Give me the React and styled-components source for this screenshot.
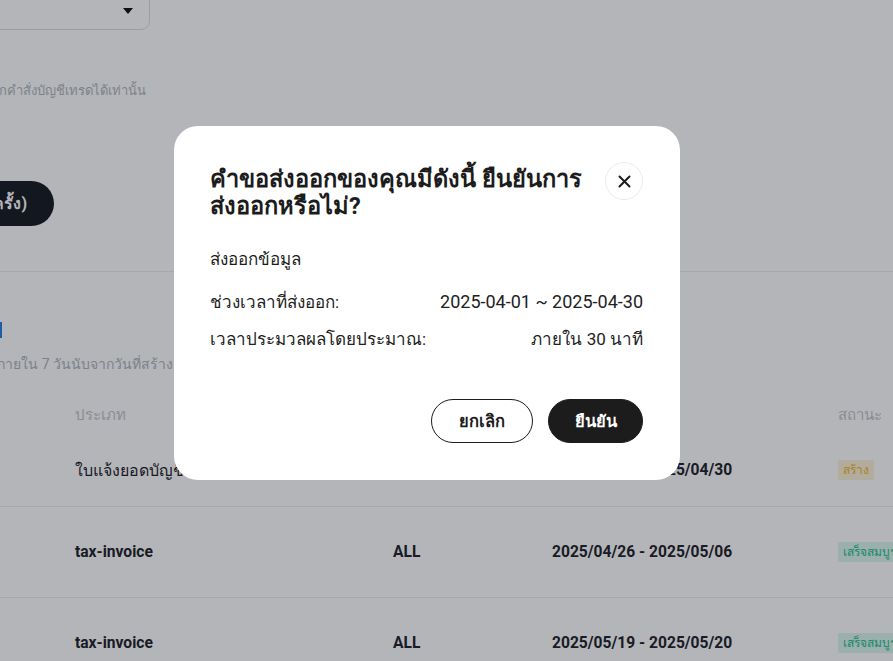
import React from "react";
import styled, { createGlobalStyle } from "styled-components";

const Global = createGlobalStyle`
  html, body { margin: 0; padding: 0; }
  body {
    background: #ffffff;
    font-family: Roboto, "Noto Sans", "Liberation Sans", sans-serif;
    color: #1f2126;
    overflow: hidden;
  }
`;

const Page = styled.div`
  width: 893px;
  height: 661px;
  overflow: hidden;
  background: #ffffff;
`;

const Select = styled.div`
  box-sizing: border-box;
  width: 300px;
  height: 48px;
  margin: -18px 0 0 -150px;
  border: 1px solid #dcdde0;
  border-radius: 9px;
  display: flex;
  align-items: center;
  justify-content: flex-end;
  padding-right: 16px;
`;

const Caret = styled.span`
  width: 0;
  height: 0;
  border-left: 5px solid transparent;
  border-right: 5px solid transparent;
  border-top: 6px solid #111;
  margin-top: 10px;
`;

const ClipRight = styled.div`
  display: flex;
  justify-content: flex-end;
  width: ${(p) => p.$end}px;
  white-space: nowrap;
  margin-top: ${(p) => p.$mt}px;
`;

const Note = styled.span`
  font-size: 13px;
  line-height: 20px;
  color: #b4b6bb;
`;

const SubNote = styled.span`
  font-size: 14px;
  line-height: 20px;
  color: #b1b4b9;
`;

const PillButton = styled.div`
  display: flex;
  align-items: center;
  justify-content: flex-end;
  box-sizing: border-box;
  width: 200px;
  height: 45px;
  margin: 80px 0 0 -146px;
  padding-right: 27px;
  border-radius: 23px;
  background: #171b22;
  color: #ffffff;
  font-weight: 700;
  font-size: 16px;
  white-space: nowrap;
`;

const Divider = styled.div`
  height: 1px;
  background: #ebecee;
  margin-top: 45px;
`;

const BlueMark = styled.div`
  width: 2px;
  height: 16px;
  margin-top: 50px;
  background: #2b7fe0;
`;

const Table = styled.div`
  margin-top: 18px;
`;

const Row = styled.div`
  display: grid;
  grid-template-columns: 318px 159px 286px 1fr;
  align-items: center;
  padding-left: 75px;
  box-sizing: border-box;
  height: ${(p) => p.$h}px;
  padding-bottom: ${(p) => p.$pb || 0}px;
  border-top: ${(p) => (p.$line ? "1px solid #ebecee" : "none")};
  white-space: nowrap;
`;

const HeadCell = styled.span`
  font-size: 15px;
  color: #c3c5c9;
`;

const Cell = styled.span`
  font-size: ${(p) => (p.$thai ? 16 : 15.6)}px;
  font-weight: ${(p) => (p.$thai ? 500 : 700)};
  color: #1f2228;
`;

const Tag = styled.span`
  justify-self: start;
  font-size: 12px;
  line-height: 20px;
  padding: 0 5px;
  border-radius: 2px;
  color: ${(p) => (p.$kind === "done" ? "#22bf8f" : "#f2b52a")};
  background: ${(p) => (p.$kind === "done" ? "#dcf7ec" : "#fdf2d6")};
`;

const Backdrop = styled.div`
  position: fixed;
  inset: 0;
  background: rgba(10, 16, 30, 0.31);
`;

const Modal = styled.div`
  position: absolute;
  left: 174px;
  top: 126px;
  width: 506px;
  box-sizing: border-box;
  padding: 36px 37px 37px 36px;
  background: #ffffff;
  border-radius: 24px;
  color: #1c1c1c;
`;

const Header = styled.div`
  display: flex;
  align-items: flex-start;
  justify-content: space-between;
  gap: 12px;
`;

const Title = styled.h2`
  margin: 0;
  padding-top: 4px;
  font-size: 23.6px;
  line-height: 27px;
  font-weight: 700;
  color: #1c1c1c;
  white-space: nowrap;
`;

const CloseButton = styled.button`
  flex: none;
  width: 38px;
  height: 38px;
  border-radius: 50%;
  border: 1.5px solid #ebebeb;
  background: #ffffff;
  display: flex;
  align-items: center;
  justify-content: center;
  padding: 0;
  color: #1c1c1c;
`;

const Subtitle = styled.div`
  margin-top: 27px;
  font-size: 17px;
  line-height: 24px;
`;

const InfoList = styled.div`
  margin-top: 19px;
  display: flex;
  flex-direction: column;
  gap: 13px;
`;

const InfoRow = styled.div`
  display: flex;
  justify-content: space-between;
  align-items: center;
  font-size: 17px;
  line-height: 24px;
  color: #222;
`;

const Value = styled.span`
  font-size: ${(p) => (p.$digits ? 18 : 17)}px;
`;

const Actions = styled.div`
  margin-top: 48px;
  display: flex;
  justify-content: flex-end;
  gap: 15px;
`;

const ActionButton = styled.button`
  height: 44px;
  width: ${(p) => (p.$primary ? 95 : 102)}px;
  border-radius: 22px;
  border: 1px solid #1c1c1c;
  background: ${(p) => (p.$primary ? "#1c1c1c" : "#ffffff")};
  color: ${(p) => (p.$primary ? "#ffffff" : "#1c1c1c")};
  font-family: inherit;
  font-size: 16.5px;
  font-weight: 700;
  padding: 0;
`;

export default function App() {
  return (
    <>
      <Global />
      <Page>
        <Select>
          <Caret />
        </Select>
        <ClipRight $end={146} $mt={51}>
          <Note>ข้อมูลที่ส่งออกได้จะมาจากคำสั่งบัญชีเทรดได้เท่านั้น</Note>
        </ClipRight>
        <PillButton>ส่งออก (เหลือ 5 ครั้ง)</PillButton>
        <Divider />
        <BlueMark />
        <ClipRight $end={173} $mt={16}>
          <SubNote>ไฟล์จะหมดอายุภายใน 7 วันนับจากวันที่สร้าง</SubNote>
        </ClipRight>
        <Table>
          <Row $h={46}>
            <HeadCell>ประเภท</HeadCell>
            <HeadCell>บัญชี</HeadCell>
            <HeadCell>ช่วงเวลา</HeadCell>
            <HeadCell>สถานะ</HeadCell>
          </Row>
          <Row $h={68} $pb={4}>
            <Cell $thai>ใบแจ้งยอดบัญชี</Cell>
            <Cell>ALL</Cell>
            <Cell>2025/04/01 - 2025/04/30</Cell>
            <Tag>สร้าง</Tag>
          </Row>
          <Row $h={91} $line>
            <Cell>tax-invoice</Cell>
            <Cell>ALL</Cell>
            <Cell>2025/04/26 - 2025/05/06</Cell>
            <Tag $kind="done">เสร็จสมบูรณ์</Tag>
          </Row>
          <Row $h={91} $line>
            <Cell>tax-invoice</Cell>
            <Cell>ALL</Cell>
            <Cell>2025/05/19 - 2025/05/20</Cell>
            <Tag $kind="done">เสร็จสมบูรณ์</Tag>
          </Row>
        </Table>
      </Page>
      <Backdrop>
        <Modal role="dialog">
          <Header>
            <Title>
              คำขอส่งออกของคุณมีดังนี้ ยืนยันการ
              <br />
              ส่งออกหรือไม่?
            </Title>
            <CloseButton aria-label="close">
              <svg width="13" height="13" viewBox="0 0 13 13">
                <path d="M1.5 1.5 L11.5 11.5 M11.5 1.5 L1.5 11.5" stroke="#1c1c1c" strokeWidth="2" strokeLinecap="round" />
              </svg>
            </CloseButton>
          </Header>
          <Subtitle>ส่งออกข้อมูล</Subtitle>
          <InfoList>
            <InfoRow>
              <span>ช่วงเวลาที่ส่งออก:</span>
              <Value $digits>2025-04-01 ~ 2025-04-30</Value>
            </InfoRow>
            <InfoRow>
              <span>เวลาประมวลผลโดยประมาณ:</span>
              <Value>ภายใน 30 นาที</Value>
            </InfoRow>
          </InfoList>
          <Actions>
            <ActionButton>ยกเลิก</ActionButton>
            <ActionButton $primary>ยืนยัน</ActionButton>
          </Actions>
        </Modal>
      </Backdrop>
    </>
  );
}
